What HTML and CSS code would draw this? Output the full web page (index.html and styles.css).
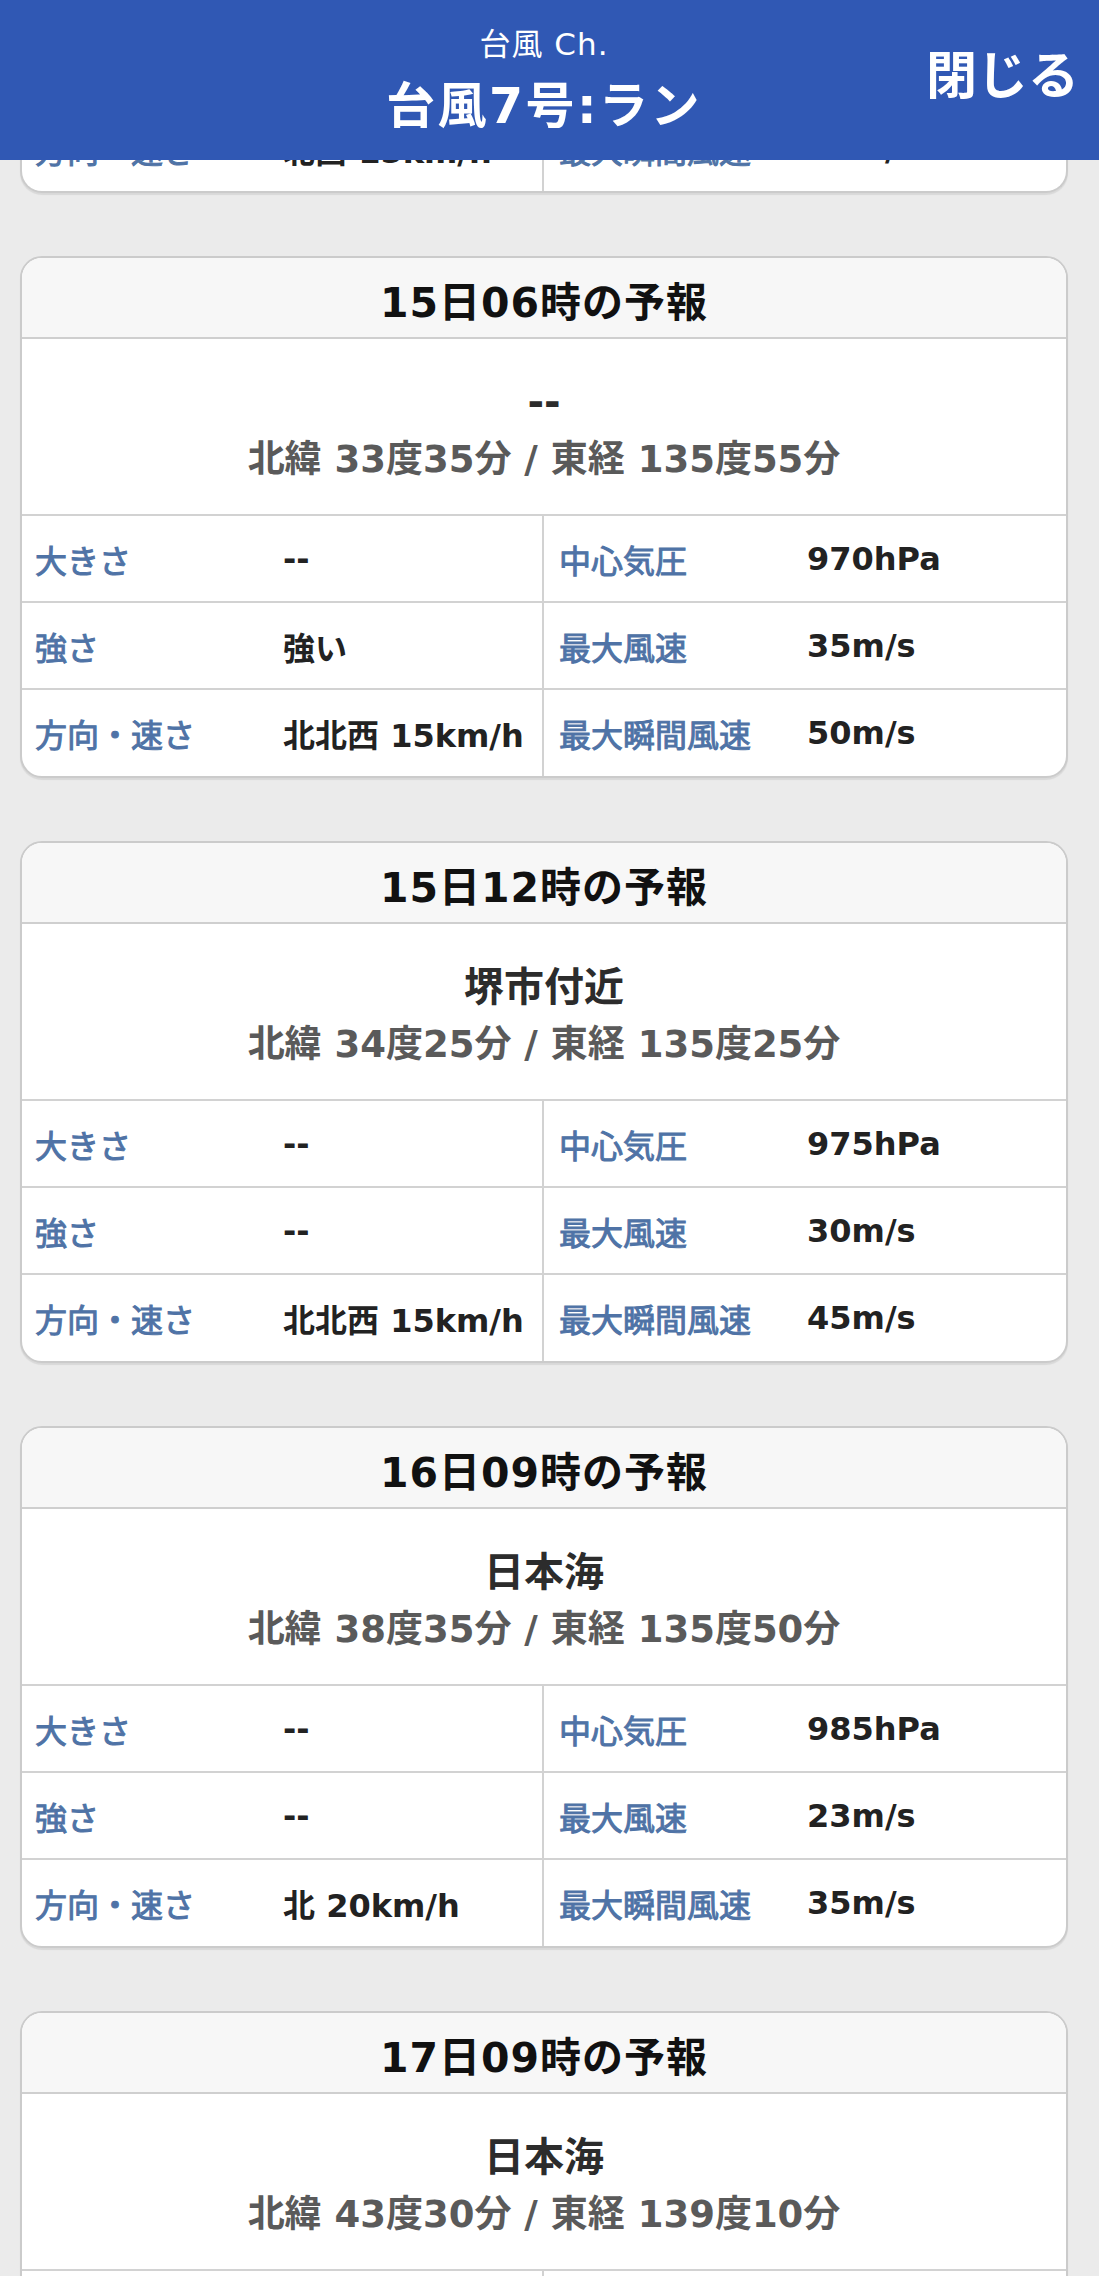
FILE: index.html
```html
<!DOCTYPE html>
<html lang="ja">
<head>
<meta charset="utf-8">
<title>台風7号:ラン</title>
<link rel="stylesheet" href="styles.css">
</head>
<body>
<header class="topbar">
  <div class="topbar-side"></div>
  <div class="topbar-center">
    <div class="topbar-sub">台風 Ch.</div>
    <div class="topbar-title">台風7号:ラン</div>
  </div>
  <div class="topbar-side topbar-right"><button class="close-btn">閉じる</button></div>
</header>

<main class="list">
  <section class="card card-fragment">
    <div class="row row-last">
      <div class="half half-left"><span class="label">方向・速さ</span><span class="value">北西 15km/h</span></div>
      <div class="half"><span class="label">最大瞬間風速</span><span class="value">30m/s</span></div>
    </div>
  </section>

  <section class="card">
    <div class="card-head">15日06時の予報</div>
    <div class="card-body">
      <div class="place">--</div>
      <div class="coords">北緯 33度35分 / 東経 135度55分</div>
    </div>
    <div class="row">
      <div class="half half-left"><span class="label">大きさ</span><span class="value">--</span></div>
      <div class="half"><span class="label">中心気圧</span><span class="value">970hPa</span></div>
    </div>
    <div class="row">
      <div class="half half-left"><span class="label">強さ</span><span class="value">強い</span></div>
      <div class="half"><span class="label">最大風速</span><span class="value">35m/s</span></div>
    </div>
    <div class="row row-last">
      <div class="half half-left"><span class="label">方向・速さ</span><span class="value">北北西 15km/h</span></div>
      <div class="half"><span class="label">最大瞬間風速</span><span class="value">50m/s</span></div>
    </div>
  </section>

  <section class="card">
    <div class="card-head">15日12時の予報</div>
    <div class="card-body">
      <div class="place">堺市付近</div>
      <div class="coords">北緯 34度25分 / 東経 135度25分</div>
    </div>
    <div class="row">
      <div class="half half-left"><span class="label">大きさ</span><span class="value">--</span></div>
      <div class="half"><span class="label">中心気圧</span><span class="value">975hPa</span></div>
    </div>
    <div class="row">
      <div class="half half-left"><span class="label">強さ</span><span class="value">--</span></div>
      <div class="half"><span class="label">最大風速</span><span class="value">30m/s</span></div>
    </div>
    <div class="row row-last">
      <div class="half half-left"><span class="label">方向・速さ</span><span class="value">北北西 15km/h</span></div>
      <div class="half"><span class="label">最大瞬間風速</span><span class="value">45m/s</span></div>
    </div>
  </section>

  <section class="card">
    <div class="card-head">16日09時の予報</div>
    <div class="card-body">
      <div class="place">日本海</div>
      <div class="coords">北緯 38度35分 / 東経 135度50分</div>
    </div>
    <div class="row">
      <div class="half half-left"><span class="label">大きさ</span><span class="value">--</span></div>
      <div class="half"><span class="label">中心気圧</span><span class="value">985hPa</span></div>
    </div>
    <div class="row">
      <div class="half half-left"><span class="label">強さ</span><span class="value">--</span></div>
      <div class="half"><span class="label">最大風速</span><span class="value">23m/s</span></div>
    </div>
    <div class="row row-last">
      <div class="half half-left"><span class="label">方向・速さ</span><span class="value">北 20km/h</span></div>
      <div class="half"><span class="label">最大瞬間風速</span><span class="value">35m/s</span></div>
    </div>
  </section>

  <section class="card">
    <div class="card-head">17日09時の予報</div>
    <div class="card-body">
      <div class="place">日本海</div>
      <div class="coords">北緯 43度30分 / 東経 139度10分</div>
    </div>
    <div class="row row-last">
      <div class="half half-left"></div>
      <div class="half"></div>
    </div>
  </section>
</main>
</body>
</html>
```

FILE: styles.css
```css
html, body {
  margin: 0;
  padding: 0;
}

body {
  background: #ebebeb;
  font-family: "DejaVu Sans", "Noto Sans CJK JP", sans-serif;
  color: #222;
}

.topbar {
  position: fixed;
  top: 0;
  left: 0;
  right: 0;
  height: 160px;
  z-index: 10;
  background: #3058b4;
  color: #fff;
  display: grid;
  grid-template-columns: 1fr auto 1fr;
  align-items: start;
  padding-right: 11px;
}

.topbar-center {
  display: flex;
  flex-direction: column;
  align-items: center;
  padding-top: 24px;
}

.topbar-sub {
  font-size: 31px;
  line-height: 40px;
  letter-spacing: 1px;
}

.topbar-title {
  font-size: 49px;
  font-weight: bold;
  line-height: 64px;
  margin-top: 11px;
  letter-spacing: 2.5px;
}

.topbar-right {
  display: flex;
  justify-content: flex-end;
  padding-top: 42px;
  padding-right: 9px;
}

.close-btn {
  background: none;
  border: none;
  padding: 0;
  color: #fff;
  font-family: "Noto Sans CJK JP", sans-serif;
  font-size: 51px;
  font-weight: bold;
  line-height: 60px;
}

.list {
  display: flex;
  flex-direction: column;
  gap: 63px;
  padding: 107px 31px 40px 20px;
}

.card {
  background: #fff;
  border: 2px solid #cbcbcb;
  border-radius: 22px;
  overflow: hidden;
  box-shadow: 0 2px 1px rgba(0, 0, 0, 0.08);
}

.card-fragment {
  border-top: none;
  border-top-left-radius: 0;
  border-top-right-radius: 0;
}

.card-head {
  height: 81px;
  box-sizing: border-box;
  background: #f7f7f7;
  border-bottom: 2px solid #cfcfcf;
  display: flex;
  align-items: center;
  justify-content: center;
  font-size: 41px;
  font-weight: bold;
  letter-spacing: 1px;
  color: #111;
  padding-top: 2px;
}

.card-body {
  height: 177px;
  box-sizing: border-box;
  border-bottom: 2px solid #d2d2d2;
  padding-top: 37px;
  display: flex;
  flex-direction: column;
  align-items: center;
}

.place {
  font-size: 40px;
  font-weight: bold;
  line-height: 52px;
  color: #2c2c2c;
}

.coords {
  font-size: 37px;
  font-weight: bold;
  line-height: 52px;
  margin-top: 6px;
  color: #5a5a5a;
}

.row {
  display: grid;
  grid-template-columns: 1fr 1fr;
  height: 87px;
  box-sizing: border-box;
  border-bottom: 2px solid #d2d2d2;
}

.row-last {
  border-bottom: none;
  height: 86px;
}

.card-fragment .row {
  height: 84px;
}

.half {
  display: flex;
  align-items: center;
  padding-left: 13px;
}

.half-left {
  border-right: 2px solid #d2d2d2;
}

.half:not(.half-left) {
  padding-left: 15px;
}

.label {
  width: 248px;
  flex: none;
  font-size: 32px;
  font-weight: normal;
  -webkit-text-stroke: 1px #4f73a6;
  color: #4f73a6;
}

.value {
  font-size: 32px;
  font-weight: bold;
  color: #222;
  white-space: nowrap;
}
```
